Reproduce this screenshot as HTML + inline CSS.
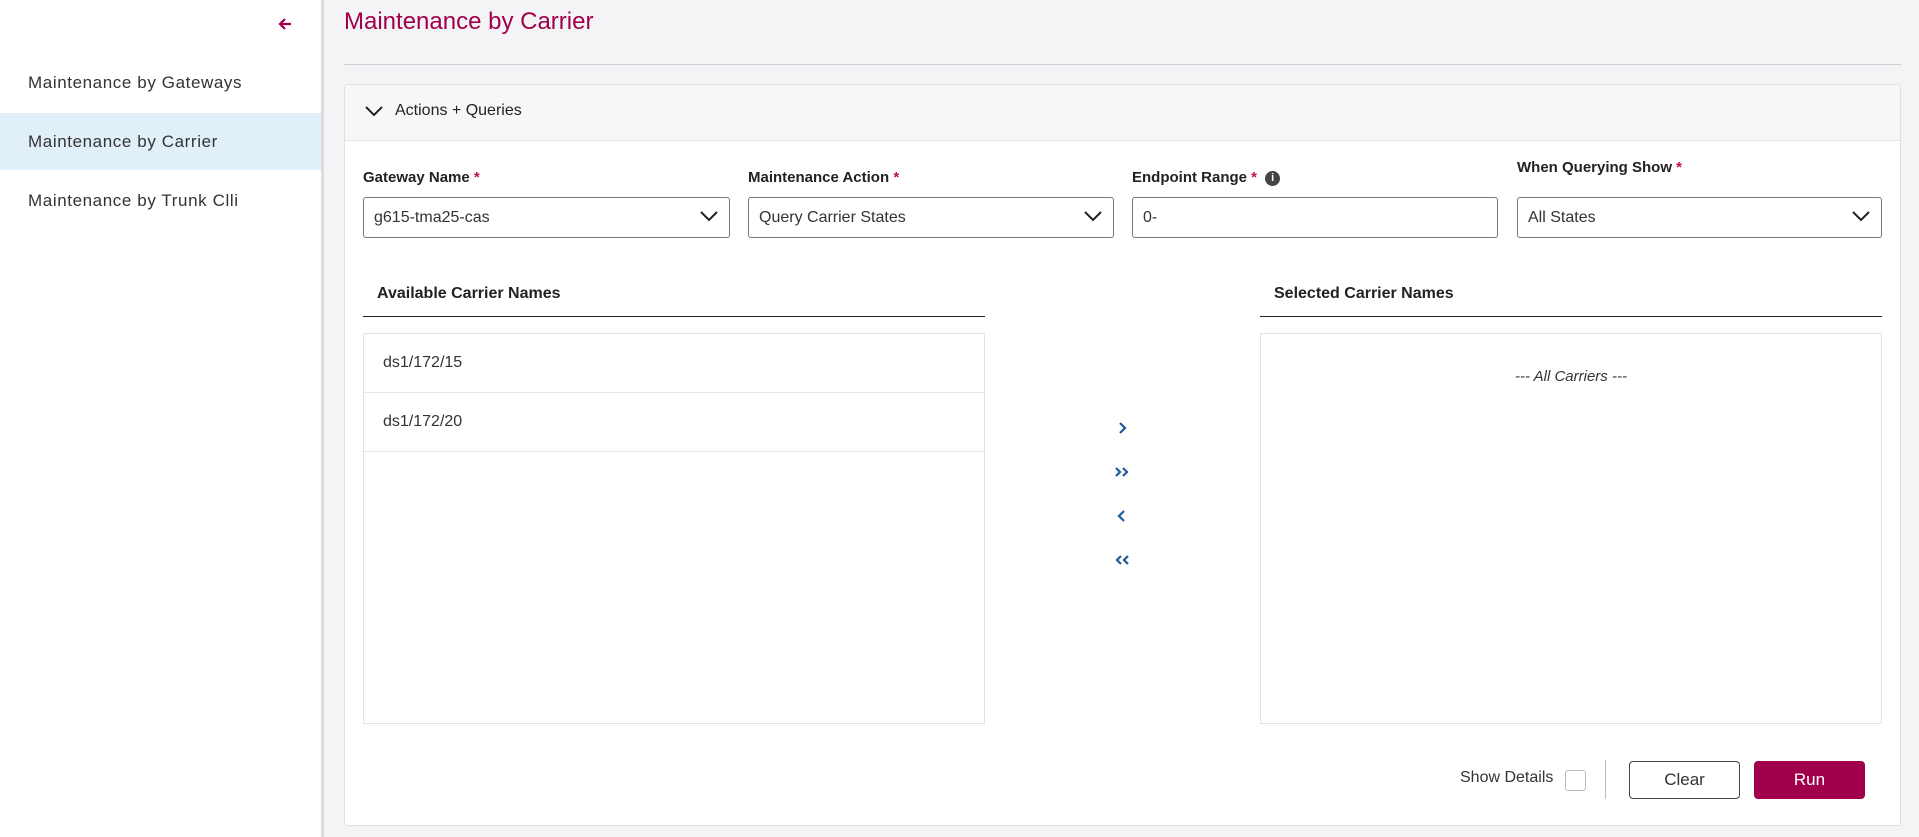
<!DOCTYPE html>
<html><head><meta charset="utf-8"><style>
*{box-sizing:border-box;margin:0;padding:0}
body{width:1919px;height:837px;background:#f4f4f6;font-family:"Liberation Sans",sans-serif;color:#222;position:relative;overflow:hidden}
.abs{position:absolute}
.side{left:0;top:0;width:324px;height:837px;background:#fff;border-right:3px solid #dcdcdf}
.nav{position:absolute;left:0;width:321px;height:57px;line-height:57px;padding-left:28px;font-size:17px;letter-spacing:0.6px;color:#333}
.title{left:344px;top:8px;font-size:24px;color:#a0004b}
.card{left:344px;top:84px;width:1557px;height:742px;background:#fff;border:1px solid #e0e0e3;border-radius:3px}
.hdr{left:0;top:0;width:100%;height:56px;background:#f7f7f9;border-bottom:1px solid #e3e3e6}
.lbl{font-size:15px;font-weight:bold;color:#222}
.req{color:#c0103d}
.inp{height:41px;border:1px solid #777;border-radius:3px;font-size:16px;line-height:39px;padding-left:10px;color:#333}
.inp svg{position:absolute;right:10px;top:12px}
.sub{font-size:16px;font-weight:bold;color:#222}
.box{border:1px solid #e3e3e6;background:#fff}
.row{height:59px;line-height:58px;border-bottom:1px solid #e6e6e9;padding-left:19px;font-size:16px;color:#333}
.arr{left:769px;width:16px;height:16px}
.btn{height:38px;border-radius:4px;font-size:17px;text-align:center;line-height:36px}
</style></head><body>
<div class="abs side">
 <svg class="abs" style="left:277px;top:16px" width="16" height="16" viewBox="0 0 16 16"><path d="M14 8H3M8 3L3 8l5 5" stroke="#a0004b" stroke-width="2.2" fill="none"/></svg>
 <div class="nav" style="top:54px">Maintenance by Gateways</div>
 <div class="nav" style="top:113px;background:#e1f0f8">Maintenance by Carrier</div>
 <div class="nav" style="top:172px">Maintenance by Trunk Clli</div>
</div>
<div class="abs title">Maintenance by Carrier</div>
<div class="abs" style="left:344px;top:64px;width:1557px;height:1px;background:#cfcfd3"></div>
<div class="abs card">
 <div class="abs hdr">
  <svg class="abs" style="left:20px;top:20px" width="18" height="12" viewBox="0 0 18 12"><path d="M1 2l8 8 8-8" stroke="#222" stroke-width="2" fill="none"/></svg>
  <div class="abs" style="left:50px;top:17px;font-size:16px;color:#222">Actions + Queries</div>
 </div>
 <div class="abs lbl" style="left:18px;top:84px">Gateway Name <span class="req">*</span></div>
 <div class="abs lbl" style="left:403px;top:84px">Maintenance Action <span class="req">*</span></div>
 <div class="abs lbl" style="left:787px;top:84px">Endpoint Range <span class="req">*</span> <span style="display:inline-block;width:15px;height:15px;border-radius:50%;background:#444;color:#fff;font-size:11px;text-align:center;line-height:15px;vertical-align:1px;margin-left:4px">i</span></div>
 <div class="abs lbl" style="left:1172px;top:74px">When Querying Show <span class="req">*</span></div>
 <div class="abs inp" style="left:18px;top:112px;width:367px">g615-tma25-cas<svg width="20" height="12" viewBox="0 0 20 12"><path d="M2 2l8 8 8-8" stroke="#222" stroke-width="2" fill="none"/></svg></div>
 <div class="abs inp" style="left:403px;top:112px;width:366px">Query Carrier States<svg width="20" height="12" viewBox="0 0 20 12"><path d="M2 2l8 8 8-8" stroke="#222" stroke-width="2" fill="none"/></svg></div>
 <div class="abs inp" style="left:787px;top:112px;width:366px">0-</div>
 <div class="abs inp" style="left:1172px;top:112px;width:365px">All States<svg width="20" height="12" viewBox="0 0 20 12"><path d="M2 2l8 8 8-8" stroke="#222" stroke-width="2" fill="none"/></svg></div>
 <div class="abs sub" style="left:32px;top:200px">Available Carrier Names</div>
 <div class="abs" style="left:18px;top:231px;width:622px;height:1px;background:#222"></div>
 <div class="abs sub" style="left:929px;top:200px">Selected Carrier Names</div>
 <div class="abs" style="left:915px;top:231px;width:622px;height:1px;background:#222"></div>
 <div class="abs box" style="left:18px;top:248px;width:622px;height:391px">
  <div class="row">ds1/172/15</div><div class="row">ds1/172/20</div>
 </div>
 <div class="abs box" style="left:915px;top:248px;width:622px;height:391px">
  <div style="text-align:center;margin-top:34px;font-style:italic;font-size:15px;color:#333">--- All Carriers ---</div>
 </div>
 <svg class="abs arr" style="top:335px" viewBox="0 0 16 16"><path d="M6 3l5 5-5 5" stroke="#1f5a96" stroke-width="2.2" fill="none"/></svg>
 <svg class="abs arr" style="top:379px" viewBox="0 0 16 16"><path d="M2 4l4 4-4 4M9 4l4 4-4 4" stroke="#1f5a96" stroke-width="2.2" fill="none"/></svg>
 <svg class="abs arr" style="top:423px" viewBox="0 0 16 16"><path d="M10 3L5 8l5 5" stroke="#1f5a96" stroke-width="2.2" fill="none"/></svg>
 <svg class="abs arr" style="top:467px" viewBox="0 0 16 16"><path d="M7 4L3 8l4 4M14 4l-4 4 4 4" stroke="#1f5a96" stroke-width="2.2" fill="none"/></svg>
 <div class="abs" style="left:1115px;top:684px;font-size:16px;color:#333">Show Details</div>
 <div class="abs" style="left:1220px;top:685px;width:21px;height:21px;border:1px solid #bbb;border-radius:3px"></div>
 <div class="abs" style="left:1260px;top:675px;width:1px;height:39px;background:#bbb"></div>
 <div class="abs btn" style="left:1284px;top:676px;width:111px;border:1px solid #444;color:#333">Clear</div>
 <div class="abs btn" style="left:1409px;top:676px;width:111px;background:#a0004b;color:#fff;line-height:38px">Run</div>
</div>
</body></html>
